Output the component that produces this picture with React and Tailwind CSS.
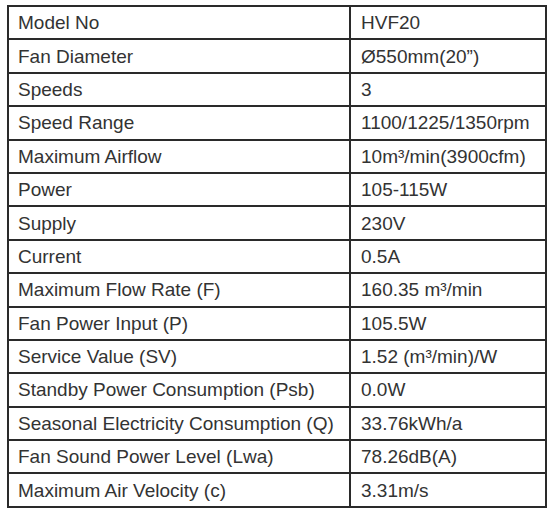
const rows = [
  ["Model No", "HVF20"],
  ["Fan Diameter", "Ø550mm(20”)"],
  ["Speeds", "3"],
  ["Speed Range", "1100/1225/1350rpm"],
  ["Maximum Airflow", "10m³/min(3900cfm)"],
  ["Power", "105-115W"],
  ["Supply", "230V"],
  ["Current", "0.5A"],
  ["Maximum Flow Rate (F)", "160.35 m³/min"],
  ["Fan Power Input (P)", "105.5W"],
  ["Service Value (SV)", "1.52 (m³/min)/W"],
  ["Standby Power Consumption (Psb)", "0.0W"],
  ["Seasonal Electricity Consumption (Q)", "33.76kWh/a"],
  ["Fan Sound Power Level (Lwa)", "78.26dB(A)"],
  ["Maximum Air Velocity (c)", "3.31m/s"],
];

export default function App() {
  return (
    <div className="w-[550px] h-[512px] bg-white pt-[5px] pl-[7px]">
      <table className="w-[540px] border-collapse border-2 border-[#2a2a2a] font-['Liberation_Sans',Arial,sans-serif] text-[19px] text-[#333]">
        <tbody>
          {rows.map(([k, v]) => (
            <tr key={k} className="h-[33.4px]">
              <td className="w-[342px] border-2 border-[#2a2a2a] pl-[9px] leading-none">{k}</td>
              <td className="border-2 border-[#2a2a2a] pl-[10px] leading-none">{v}</td>
            </tr>
          ))}
        </tbody>
      </table>
    </div>
  );
}
